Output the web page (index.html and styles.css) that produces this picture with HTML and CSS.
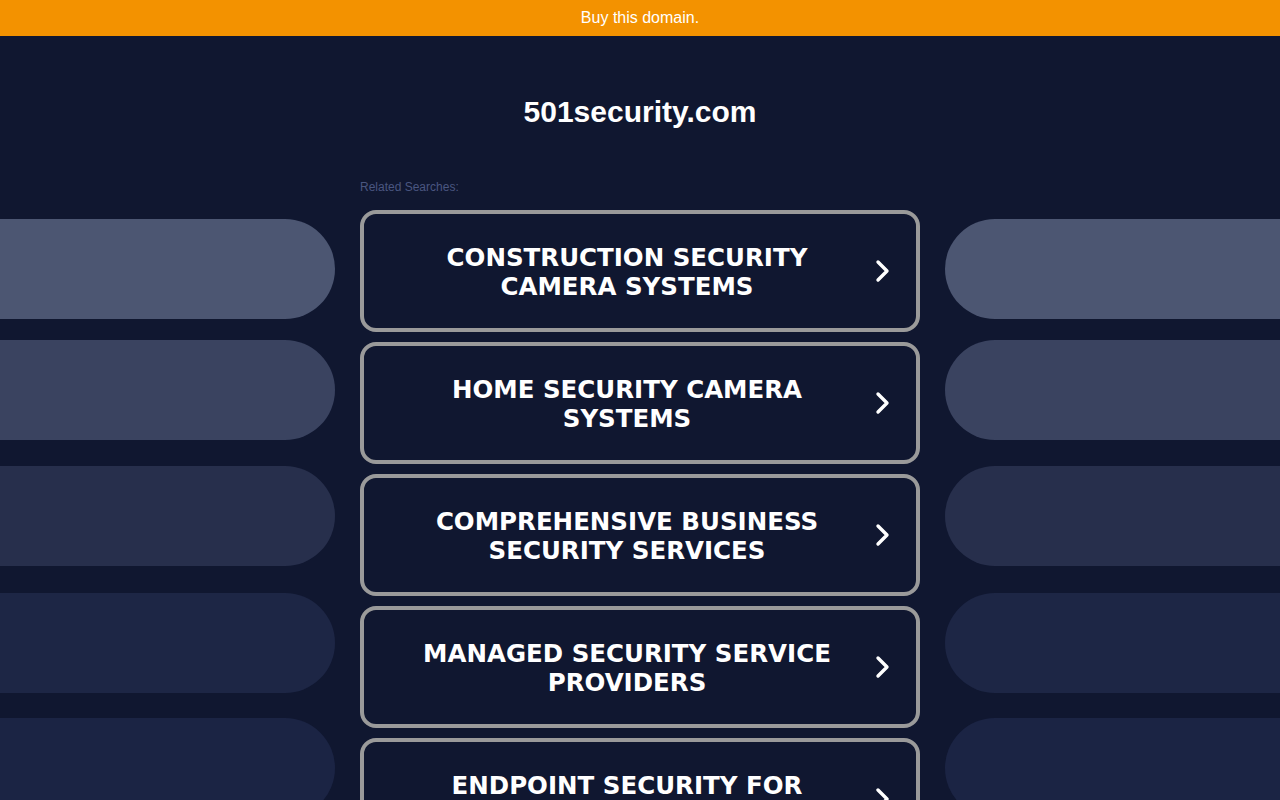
FILE: index.html
```html
<!DOCTYPE html>
<html>
<head>
<meta charset="utf-8">
<link rel="stylesheet" href="styles.css">
</head>
<body>
<div class="topbar">Buy this domain.</div>
<h1 class="title">501security.com</h1>
<div class="main">
  <div class="side side-left">
    <div class="pill p1"></div>
    <div class="pill p2"></div>
    <div class="pill p3"></div>
    <div class="pill p4"></div>
    <div class="pill p5"></div>
  </div>
  <div class="center">
    <div class="related">Related Searches:</div>
    <a class="card"><span class="label">CONSTRUCTION SECURITY CAMERA SYSTEMS</span><svg class="chev" viewBox="0 0 16 24" width="16" height="24"><path d="M3 3 L12 12 L3 21" fill="none" stroke="#fff" stroke-width="3.4" stroke-linecap="round" stroke-linejoin="round"/></svg></a>
    <a class="card"><span class="label">HOME SECURITY CAMERA SYSTEMS</span><svg class="chev" viewBox="0 0 16 24" width="16" height="24"><path d="M3 3 L12 12 L3 21" fill="none" stroke="#fff" stroke-width="3.4" stroke-linecap="round" stroke-linejoin="round"/></svg></a>
    <a class="card"><span class="label">COMPREHENSIVE BUSINESS SECURITY SERVICES</span><svg class="chev" viewBox="0 0 16 24" width="16" height="24"><path d="M3 3 L12 12 L3 21" fill="none" stroke="#fff" stroke-width="3.4" stroke-linecap="round" stroke-linejoin="round"/></svg></a>
    <a class="card"><span class="label">MANAGED SECURITY SERVICE PROVIDERS</span><svg class="chev" viewBox="0 0 16 24" width="16" height="24"><path d="M3 3 L12 12 L3 21" fill="none" stroke="#fff" stroke-width="3.4" stroke-linecap="round" stroke-linejoin="round"/></svg></a>
    <a class="card"><span class="label">ENDPOINT SECURITY FOR BUSINESSES</span><svg class="chev" viewBox="0 0 16 24" width="16" height="24"><path d="M3 3 L12 12 L3 21" fill="none" stroke="#fff" stroke-width="3.4" stroke-linecap="round" stroke-linejoin="round"/></svg></a>
  </div>
  <div class="side side-right">
    <div class="pill p1"></div>
    <div class="pill p2"></div>
    <div class="pill p3"></div>
    <div class="pill p4"></div>
    <div class="pill p5"></div>
  </div>
</div>
</body>
</html>
```
FILE: styles.css
```css
html, body {
  margin: 0;
  padding: 0;
  background: #101730;
  height: 800px;
  overflow: hidden;
}
body {
  font-family: "Liberation Sans", Arial, sans-serif;
}
.topbar {
  height: 36px;
  background: #f39200;
  color: #fff;
  font-size: 16px;
  line-height: 36px;
  text-align: center;
}
.title {
  margin: 0;
  padding-top: 58px;
  height: 36px;
  line-height: 36px;
  font-size: 30px;
  font-weight: bold;
  color: #fff;
  text-align: center;
}
.main {
  display: grid;
  grid-template-columns: 335px 560px 335px;
  column-gap: 25px;
  margin-top: 50px;
}
.related {
  font-size: 12px;
  color: #4a5680;
  height: 14px;
  line-height: 14px;
  margin-bottom: 16px;
}
.center {
  display: flex;
  flex-direction: column;
  gap: 10px;
}
.related + .card { margin-top: -10px; }
.card {
  box-sizing: border-box;
  height: 122px;
  border: 4px solid #9a9a9a;
  border-radius: 16px;
  display: flex;
  align-items: center;
  padding: 0 25px 0 40px;
  text-decoration: none;
  flex-shrink: 0;
}
.label {
  flex: 1;
  text-align: center;
  font-family: "DejaVu Sans", Verdana, sans-serif;
  font-weight: bold;
  font-size: 24.5px;
  line-height: 29px;
  color: #fff;
  padding-right: 25px;
  padding-top: 2px;
}
.chev {
  flex-shrink: 0;
}
.side {
  display: flex;
  flex-direction: column;
  padding-top: 39px;
}
.pill {
  height: 100px;
  flex-shrink: 0;
}
.side-left .pill { border-radius: 0 50px 50px 0; }
.side-right .pill { border-radius: 50px 0 0 50px; }
.p1 { background: #4c5672; }
.p2 { background: #3a4360; margin-top: 21px; }
.p3 { background: #272f4c; margin-top: 26px; }
.p4 { background: #1d2645; margin-top: 27px; }
.p5 { background: #1b2444; margin-top: 25px; }
```
